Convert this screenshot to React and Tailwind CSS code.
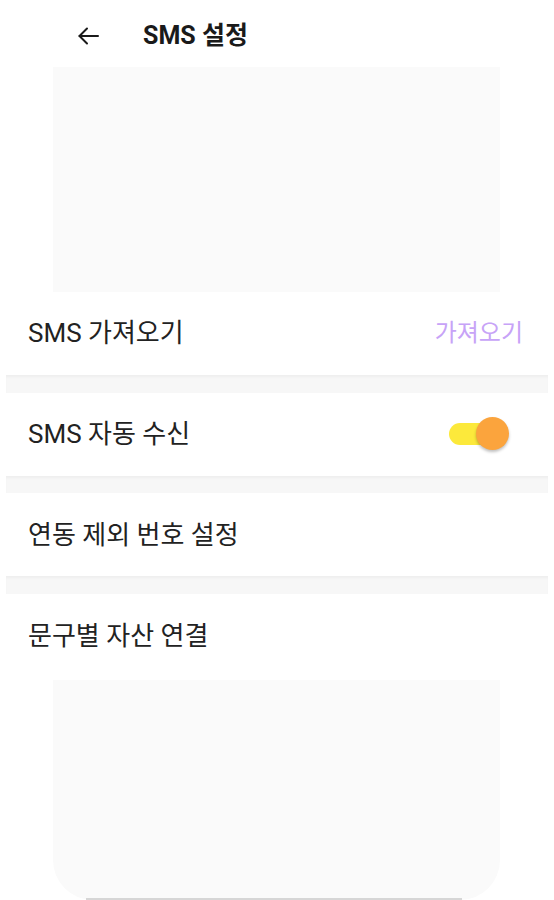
import React from "react";

function Divider() {
  return (
    <div className="mx-[6px] h-[18px] bg-[#f7f7f7] shadow-[inset_0_3px_3px_-1px_rgba(0,0,0,0.04)]" />
  );
}

function Row({ label, right }) {
  return (
    <div className="h-[83px] flex items-center justify-between pl-[28px] pr-[31px]">
      <span className="text-[26px] text-[#222222] leading-none">{label}</span>
      {right}
    </div>
  );
}

export default function App() {
  return (
    <div
      className="w-[554px] h-[900px] bg-white overflow-hidden flex flex-col"
      style={{ fontFamily: "Roboto, 'Noto Sans CJK KR', sans-serif" }}
    >
      <div className="h-[67px] flex items-center pl-[78px] pt-[4px] shrink-0">
        <svg width="21" height="18" viewBox="0 0 21 18" fill="none" stroke="#1a1a1a" strokeWidth="2" strokeLinecap="round" strokeLinejoin="round">
          <path d="M20 9H1.5" />
          <path d="M9 1.5L1.5 9L9 16.5" />
        </svg>
        <span className="ml-[44px] text-[25px] font-bold text-[#1a1a1a] leading-none">SMS 설정</span>
      </div>
      <div className="ml-[53px] w-[447px] h-[225px] bg-[#fafafa] shrink-0" />
      <Row
        label="SMS 가져오기"
        right={<span className="text-[24px] text-[#c7a3f7] leading-none">가져오기</span>}
      />
      <Divider />
      <Row
        label="SMS 자동 수신"
        right={
          <div className="relative w-[60px] h-[34px] flex items-center mr-[14px]">
            <div className="w-[46px] h-[22px] rounded-full bg-[#fce93b]" />
            <div className="absolute left-[27px] top-0 w-[33px] h-[33px] rounded-full bg-[#fba43d] shadow-[0_2px_3px_rgba(0,0,0,0.25)]" />
          </div>
        }
      />
      <Divider />
      <Row label="연동 제외 번호 설정" />
      <Divider />
      <Row label="문구별 자산 연결" />
      <div className="ml-[53px] w-[447px] h-[220px] mt-[3px] bg-[#fafafa] rounded-b-[40px] flex flex-col justify-end shrink-0">
        <div className="ml-[33px] mr-[38px] h-[2px] bg-[#d6d6d6]" />
      </div>
    </div>
  );
}
